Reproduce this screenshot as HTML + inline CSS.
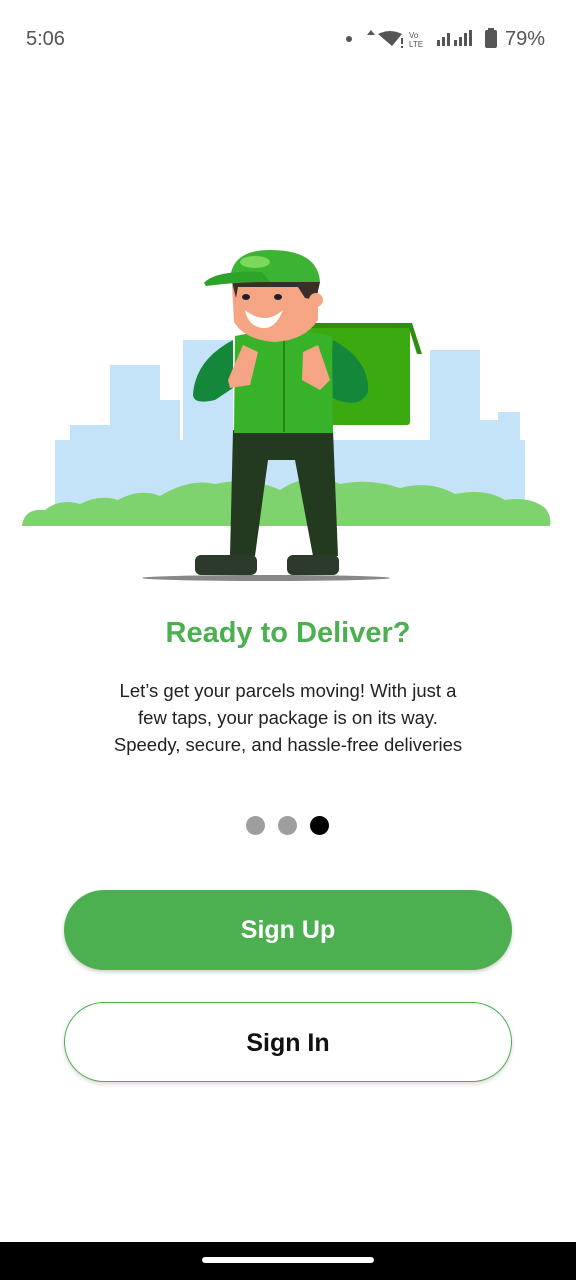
<!DOCTYPE html>
<html><head><meta charset="utf-8"><style>
html,body{margin:0;padding:0;}
body{width:576px;height:1280px;background:#fff;position:relative;overflow:hidden;font-family:"Liberation Sans",Roboto,sans-serif;}
.sb{position:absolute;top:28px;left:26px;font-size:20px;color:#555;}
.title{position:absolute;top:617px;width:100%;text-align:center;font-size:29px;font-weight:bold;color:#4caf50;}
.desc{position:absolute;top:677px;width:100%;text-align:center;font-size:18.5px;line-height:27px;color:#222;}
.dot{position:absolute;top:816px;width:19px;height:19px;border-radius:50%;background:#9e9e9e;}
.btn{position:absolute;left:64px;width:448px;height:80px;border-radius:40px;box-sizing:border-box;text-align:center;line-height:80px;font-size:25px;font-weight:bold;}
.bar{position:absolute;left:0;top:1242px;width:576px;height:38px;background:#000;}
.pill{position:absolute;left:202px;top:1257px;width:172px;height:6px;border-radius:3px;background:#fff;}
</style></head><body>
<div class="sb">5:06</div>
<div style="position:absolute;top:28px;left:345px;font-size:20px;color:#555;">
<svg width="200" height="24" viewBox="0 0 200 24" style="vertical-align:middle">
<circle cx="4" cy="11" r="3" fill="#555"/>
<path d="M26 2l4 5h-8z" fill="#555"/>
<path d="M33 6q12-6 24 0l-10 12z" fill="#555"/><rect x="56" y="10" width="2" height="6" fill="#555"/><rect x="56" y="18" width="2" height="2" fill="#555"/>
<text x="64" y="10" font-size="8" fill="#555" font-family="Liberation Sans">Vo</text><text x="64" y="19" font-size="8" fill="#555" font-family="Liberation Sans">LTE</text>
<rect x="92" y="12" width="3" height="6" fill="#555"/><rect x="97" y="9" width="3" height="9" fill="#555"/><rect x="102" y="5" width="3" height="13" fill="#555"/>
<rect x="109" y="12" width="3" height="6" fill="#555"/><rect x="114" y="9" width="3" height="9" fill="#555"/><rect x="119" y="5" width="3" height="13" fill="#555"/><rect x="124" y="2" width="3" height="16" fill="#555"/>
<rect x="140" y="2" width="12" height="18" rx="2" fill="#555"/><rect x="143" y="0" width="6" height="3" fill="#555"/>
</svg></div>
<div style="position:absolute;top:28px;left:505px;font-size:20px;color:#555;">79%</div>

<svg style="position:absolute;left:0;top:230px" width="576" height="360" viewBox="0 230 576 360">
<g fill="#c5e3f8">
<rect x="55" y="440" width="470" height="80"/>
<rect x="70" y="425" width="40" height="90"/>
<rect x="110" y="365" width="50" height="150"/>
<rect x="160" y="400" width="20" height="110"/>
<rect x="183" y="340" width="50" height="170"/>
<rect x="430" y="350" width="50" height="160"/>
<rect x="480" y="420" width="20" height="90"/>
<rect x="498" y="412" width="22" height="100"/>
</g>
<path d="M22 526 Q24 508 45 510 Q60 498 80 504 Q100 494 118 500 Q140 488 160 496 Q190 478 215 484 Q250 476 280 490 Q310 470 340 484 Q370 478 400 488 Q430 480 455 494 Q485 488 505 500 Q530 496 545 508 Q552 516 550 526 Z" fill="#7ed36f"/>
<ellipse cx="266" cy="578" rx="124" ry="3" fill="#888"/>
<rect x="300" y="323" width="110" height="102" rx="3" fill="#3aaa10"/>
<path d="M300 323 L412 323 L422 354 L417 354 L409 328 L300 328Z" fill="#2e8f0c"/>
<path d="M233 430 L333 430 L338 556 L313 556 L295 460 L268 460 L255 556 L230 556Z" fill="#243a20"/>
<rect x="195" y="555" width="62" height="20" rx="6" fill="#2c3a2c"/>
<rect x="287" y="555" width="52" height="20" rx="6" fill="#2c3a2c"/>
<path d="M233 340 Q195 360 193 395 Q194 405 215 400 L233 388Z" fill="#15873a"/>
<path d="M333 340 Q370 360 368 392 Q360 410 332 398 L330 375Z" fill="#15873a"/>
<path d="M235 336 Q285 325 332 336 L333 433 L234 433Z" fill="#38b228"/>
<rect x="283" y="340" width="2" height="92" fill="#1e8a1e"/>
<path d="M228 380 L243 345 L258 352 L250 385 L230 388Z" fill="#f5a584"/>
<path d="M303 352 L318 345 L330 380 L320 390 L302 380Z" fill="#f5a584"/>
<path d="M232 285 L318 285 L318 320 Q305 340 275 342 Q245 340 234 322Z" fill="#f5a584"/>
<path d="M232 282 L320 282 L316 300 L305 298 L298 287 L238 287 L236 298Z" fill="#3a2e28"/>
<circle cx="316" cy="300" r="7" fill="#f5a584"/>
<ellipse cx="246" cy="297" rx="4" ry="3" fill="#1e1e2e"/>
<ellipse cx="278" cy="297" rx="4" ry="3" fill="#1e1e2e"/>
<path d="M245 310 Q265 326 283 310 Q275 330 262 328 Q248 326 245 310Z" fill="#fff"/>
<path d="M230 282 Q230 250 270 250 Q318 250 320 282Z" fill="#3cb332"/>
<ellipse cx="255" cy="262" rx="15" ry="6" fill="#7ad85a"/>
<path d="M204 283 Q215 270 262 272 L270 282 Q235 282 206 286Z" fill="#2da32a"/>
</svg>

<div class="title">Ready to Deliver?</div>
<div class="desc">Let’s get your parcels moving! With just a<br>few taps, your package is on its way.<br>Speedy, secure, and hassle-free deliveries</div>
<div class="dot" style="left:246px"></div>
<div class="dot" style="left:278px"></div>
<div class="dot" style="left:310px;background:#000"></div>
<div class="btn" style="top:890px;background:#4caf50;color:#fff;box-shadow:0 2px 4px rgba(0,0,0,.2)">Sign Up</div>
<div class="btn" style="top:1002px;background:#fff;border:1.5px solid #4caf50;color:#111;box-shadow:0 2px 4px rgba(0,0,0,.15)">Sign In</div>
<div class="bar"></div><div class="pill"></div>
</body></html>
